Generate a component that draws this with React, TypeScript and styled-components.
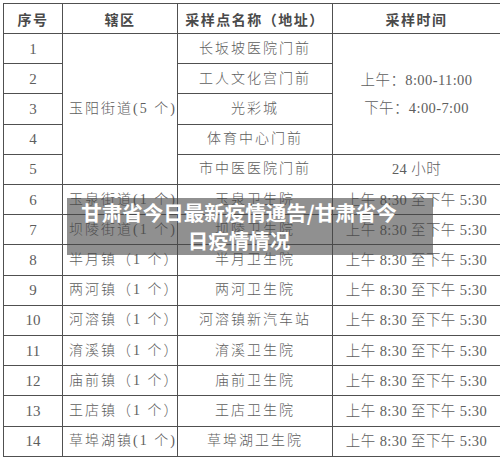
import styled, { createGlobalStyle } from "styled-components";

const GlobalStyle = createGlobalStyle`
  html, body {
    margin: 0;
    padding: 0;
    background: #ffffff;
  }
  body {
    font-family: "Liberation Serif", "Noto Sans CJK SC", serif;
  }
`;

const Page = styled.div`
  padding: 3px 4px 0 3px;
  position: relative;
  width: 500px;
  height: 460px;
  box-sizing: border-box;
`;

const Table = styled.table`
  border-collapse: collapse;
  width: 493px;
  height: 454px;
  table-layout: fixed;
  color: #5e5e5e;
  border: 1.5px solid #505050;
`;

const HeadCell = styled.th<{ $width: number }>`
  width: ${({ $width }) => $width}px;
  height: 29px;
  border: 1.5px solid #505050;
  font-family: "Liberation Serif", "Noto Sans CJK SC", serif;
  font-size: 14px;
  font-weight: 700;
  letter-spacing: 1.5px;
  color: #4a4a4a;
  padding: 0;
`;

const Cell = styled.td<{ $align?: "left" | "center" }>`
  border: 1.5px solid #505050;
  font-size: 14px;
  font-weight: 300;
  letter-spacing: 2px;
  text-align: ${({ $align }) => $align ?? "center"};
  padding: ${({ $align }) => ($align === "left" ? "0 0 0 6px" : "0")};
  white-space: nowrap;
  line-height: 28px;
`;

const Num = styled(Cell)`
  font-size: 15px;
  letter-spacing: 0;
`;

const Time = styled(Cell)`
  font-size: 14.5px;
  letter-spacing: 0.4px;
`;

const Overlay = styled.div`
  position: absolute;
  left: 67px;
  top: 198px;
  width: 366px;
  height: 57px;
  box-sizing: border-box;
  padding: 0 30px 0 8px;
  background: rgba(70, 70, 70, 0.6);
  color: #ffffff;
  font-family: "Noto Sans CJK SC", sans-serif;
  font-weight: 700;
  font-size: 20.5px;
  line-height: 28px;
  text-align: center;
`;

interface Row {
  id: number;
  district?: string;
  districtSpan?: number;
  site: string;
  time?: string[];
  timeSpan?: number;
}

const MORNING = "上午 8:30 至下午 5:30";

const ROWS: Row[] = [
  {
    id: 1,
    district: "玉阳街道(5 个)",
    districtSpan: 5,
    site: "长坂坡医院门前",
    time: ["上午：8:00-11:00", "下午：4:00-7:00"],
    timeSpan: 4,
  },
  { id: 2, site: "工人文化宫门前" },
  { id: 3, site: "光彩城" },
  { id: 4, site: "体育中心门前" },
  { id: 5, site: "市中医医院门前", time: ["24 小时"] },
  { id: 6, district: "玉泉街道(1 个)", site: "玉泉卫生院", time: [MORNING] },
  { id: 7, district: "坝陵街道(1 个)", site: "坝陵卫生院", time: [MORNING] },
  { id: 8, district: "半月镇（1 个）", site: "半月卫生院", time: [MORNING] },
  { id: 9, district: "两河镇（1 个）", site: "两河卫生院", time: [MORNING] },
  { id: 10, district: "河溶镇（1 个）", site: "河溶镇新汽车站", time: [MORNING] },
  { id: 11, district: "淯溪镇（1 个）", site: "淯溪卫生院", time: [MORNING] },
  { id: 12, district: "庙前镇（1 个）", site: "庙前卫生院", time: [MORNING] },
  { id: 13, district: "王店镇（1 个）", site: "王店卫生院", time: [MORNING] },
  { id: 14, district: "草埠湖镇(1 个)", site: "草埠湖卫生院", time: [MORNING] },
];

export default function App() {
  return (
    <>
      <GlobalStyle />
      <Page>
        <Table>
          <thead>
            <tr>
              <HeadCell $width={58}>序号</HeadCell>
              <HeadCell $width={114}>辖区</HeadCell>
              <HeadCell $width={154}>采样点名称（地址）</HeadCell>
              <HeadCell $width={167}>采样时间</HeadCell>
            </tr>
          </thead>
          <tbody>
            {ROWS.map((row) => (
              <tr key={row.id}>
                <Num>{row.id}</Num>
                {row.district && (
                  <Cell $align="left" rowSpan={row.districtSpan}>
                    {row.district}
                  </Cell>
                )}
                <Cell>{row.site}</Cell>
                {row.time && (
                  <Time rowSpan={row.timeSpan}>
                    {row.time.map((line) => (
                      <div key={line}>{line}</div>
                    ))}
                  </Time>
                )}
              </tr>
            ))}
          </tbody>
        </Table>
        <Overlay>甘肃省今日最新疫情通告/甘肃省今日疫情情况</Overlay>
      </Page>
    </>
  );
}
